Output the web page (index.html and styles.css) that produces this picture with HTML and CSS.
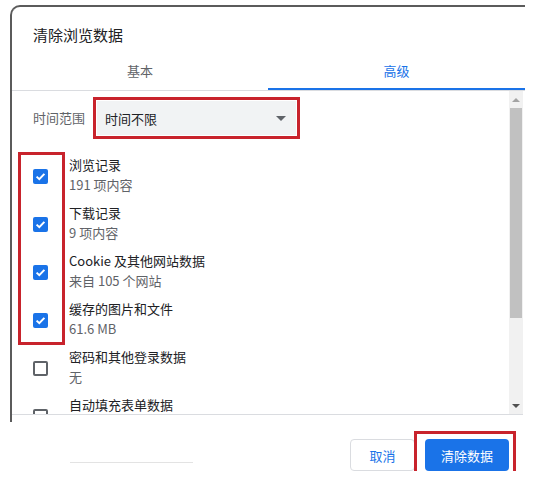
FILE: index.html
```html
<!DOCTYPE html>
<html lang="zh-CN">

<head>
    <meta charset="UTF-8">
    <meta name="viewport" content="width=device-width, initial-scale=1.0">
    <title>清除浏览数据</title>
    <link rel="stylesheet" href="styles.css">
</head>

<body>
    <div class="dialog">
        <div class="frame">
            <h1 class="title">清除浏览数据</h1>

            <div class="tabs">
                <div class="tab">基本</div>
                <div class="tab active">高级</div>
            </div>

            <div class="scroll_area">
                <div class="content">
                    <div class="range_row">
                        <span class="range_label">时间范围</span>
                        <div class="select">
                            <span>时间不限</span>
                            <span class="arrow"></span>
                        </div>
                    </div>

                    <div class="options">
                        <div class="option">
                            <span class="checkbox checked">
                                <svg viewBox="0 0 15 15" width="15" height="15"><polyline points="3.6,7.6 6.3,10.2 11.4,4.9" /></svg>
                            </span>
                            <div class="option_text">
                                <div class="option_title">浏览记录</div>
                                <div class="option_sub">191 项内容</div>
                            </div>
                        </div>
                        <div class="option">
                            <span class="checkbox checked">
                                <svg viewBox="0 0 15 15" width="15" height="15"><polyline points="3.6,7.6 6.3,10.2 11.4,4.9" /></svg>
                            </span>
                            <div class="option_text">
                                <div class="option_title">下载记录</div>
                                <div class="option_sub">9 项内容</div>
                            </div>
                        </div>
                        <div class="option">
                            <span class="checkbox checked">
                                <svg viewBox="0 0 15 15" width="15" height="15"><polyline points="3.6,7.6 6.3,10.2 11.4,4.9" /></svg>
                            </span>
                            <div class="option_text">
                                <div class="option_title">Cookie 及其他网站数据</div>
                                <div class="option_sub">来自 105 个网站</div>
                            </div>
                        </div>
                        <div class="option">
                            <span class="checkbox checked">
                                <svg viewBox="0 0 15 15" width="15" height="15"><polyline points="3.6,7.6 6.3,10.2 11.4,4.9" /></svg>
                            </span>
                            <div class="option_text">
                                <div class="option_title">缓存的图片和文件</div>
                                <div class="option_sub">61.6 MB</div>
                            </div>
                        </div>
                        <div class="option">
                            <span class="checkbox"></span>
                            <div class="option_text">
                                <div class="option_title">密码和其他登录数据</div>
                                <div class="option_sub">无</div>
                            </div>
                        </div>
                        <div class="option">
                            <span class="checkbox"></span>
                            <div class="option_text">
                                <div class="option_title">自动填充表单数据</div>
                                <div class="option_sub">&nbsp;</div>
                            </div>
                        </div>

                        <!-- red annotation around the checked boxes -->
                        <div class="mark mark_checks"></div>
                    </div>
                </div>

                <div class="scrollbar">
                    <div class="sb_btn"><span class="sb_up"></span></div>
                    <div class="sb_thumb"></div>
                    <div class="sb_track"></div>
                    <div class="sb_btn"><span class="sb_down"></span></div>
                </div>
            </div>
        </div>

        <div class="footer">
            <div class="footer_line"></div>
            <button class="btn btn_cancel">取消</button>
            <div class="btn_wrap">
                <button class="btn btn_primary">清除数据</button>
                <div class="mark mark_btn"></div>
            </div>
        </div>
    </div>
</body>

</html>
```

FILE: styles.css
```css
body {
    margin: 0;
    padding: 5px 0 0 10px;
    background: #fff;
    font-family: "Noto Sans CJK SC", "Noto Sans", sans-serif;
    color: #202124;
}

.dialog {
    width: 515px;
}

.frame {
    border-top: 2px solid #5b5b5b;
    border-left: 2px solid #5b5b5b;
    border-top-left-radius: 10px;
    padding-bottom: 7px;
}

.title {
    margin: 0;
    padding: 18px 0 9px 21px;
    font-size: 15px;
    font-weight: normal;
    line-height: 20px;
    color: #202124;
}

.tabs {
    display: flex;
    border-bottom: 1px solid #dadce0;
}

.tab {
    width: 256px;
    height: 36px;
    line-height: 34px;
    text-align: center;
    font-size: 13px;
    color: #5f6368;
    box-sizing: border-box;
}

.tab.active {
    width: 257px;
    color: #1a73e8;
    border-bottom: 2px solid #1a73e8;
}

.scroll_area {
    display: flex;
    height: 323px;
    margin-right: 2px;
    border-bottom: 1px solid #dadce0;
    overflow: hidden;
}

.content {
    flex: 1;
    padding-top: 6px;
}

.range_row {
    display: flex;
    align-items: center;
}

.range_label {
    width: 60px;
    padding-left: 21px;
    font-size: 13px;
    line-height: 20px;
    color: #5f6368;
}

.select {
    display: flex;
    align-items: center;
    justify-content: space-between;
    width: 207px;
    height: 42px;
    box-sizing: border-box;
    padding: 0 11px 0 9px;
    border: 3px solid #c8232c;
    background: #f1f3f4;
    box-shadow: inset 0 0 0 1px #fff;
    font-size: 13px;
    color: #202124;
}

.arrow {
    width: 0;
    height: 0;
    border-left: 5px solid transparent;
    border-right: 5px solid transparent;
    border-top: 5px solid #5f6368;
}

.options {
    position: relative;
    margin-top: 13px;
}

.option {
    display: flex;
    align-items: center;
    height: 48px;
    padding-left: 21px;
}

.checkbox {
    width: 15px;
    height: 15px;
    box-sizing: border-box;
    border: 2px solid #5f6368;
    border-radius: 2px;
    flex-shrink: 0;
}

.checkbox.checked {
    border: none;
    background: #1a73e8;
}

.checkbox svg {
    display: block;
    fill: none;
    stroke: #fff;
    stroke-width: 2;
}

.option_text {
    margin: -2px 0 0 21px;
    line-height: 20px;
    font-size: 13px;
}

.option_sub {
    color: #5f6368;
}

.mark {
    position: absolute;
    box-sizing: border-box;
    border: 3px solid #c8232c;
}

.mark_checks {
    left: 6px;
    top: 0;
    width: 47px;
    height: 193px;
}

/* fake scrollbar */
.scrollbar {
    display: flex;
    flex-direction: column;
    width: 14px;
    background: #f1f1f1;
}

.sb_btn {
    height: 17px;
    display: flex;
    align-items: center;
    justify-content: center;
}

.sb_up,
.sb_down {
    width: 0;
    height: 0;
    border-left: 4px solid transparent;
    border-right: 4px solid transparent;
}

.sb_up {
    border-bottom: 4px solid #a3a3a3;
}

.sb_down {
    border-top: 4px solid #505050;
}

.sb_thumb {
    height: 210px;
    margin: 0 1px;
    background: #c1c1c1;
}

.sb_track {
    flex: 1;
}

.footer {
    display: flex;
    align-items: flex-start;
    padding: 17px 16px 0 60px;
}

.footer_line {
    width: 123px;
    height: 1px;
    margin-top: 23px;
    margin-right: auto;
    background: #e3e3e3;
}

.btn {
    height: 32px;
    border-radius: 4px;
    font-family: inherit;
    font-size: 13px;
    cursor: pointer;
}

.btn_cancel {
    width: 65px;
    margin-right: 10px;
    border: 1px solid #dadce0;
    background: #fff;
    color: #1a73e8;
}

.btn_wrap {
    position: relative;
}

.btn_primary {
    display: block;
    width: 84px;
    border: none;
    background: #1a73e8;
    color: #fff;
}

.mark_btn {
    left: -11px;
    top: -8px;
    width: 102px;
    height: 47px;
}
```
